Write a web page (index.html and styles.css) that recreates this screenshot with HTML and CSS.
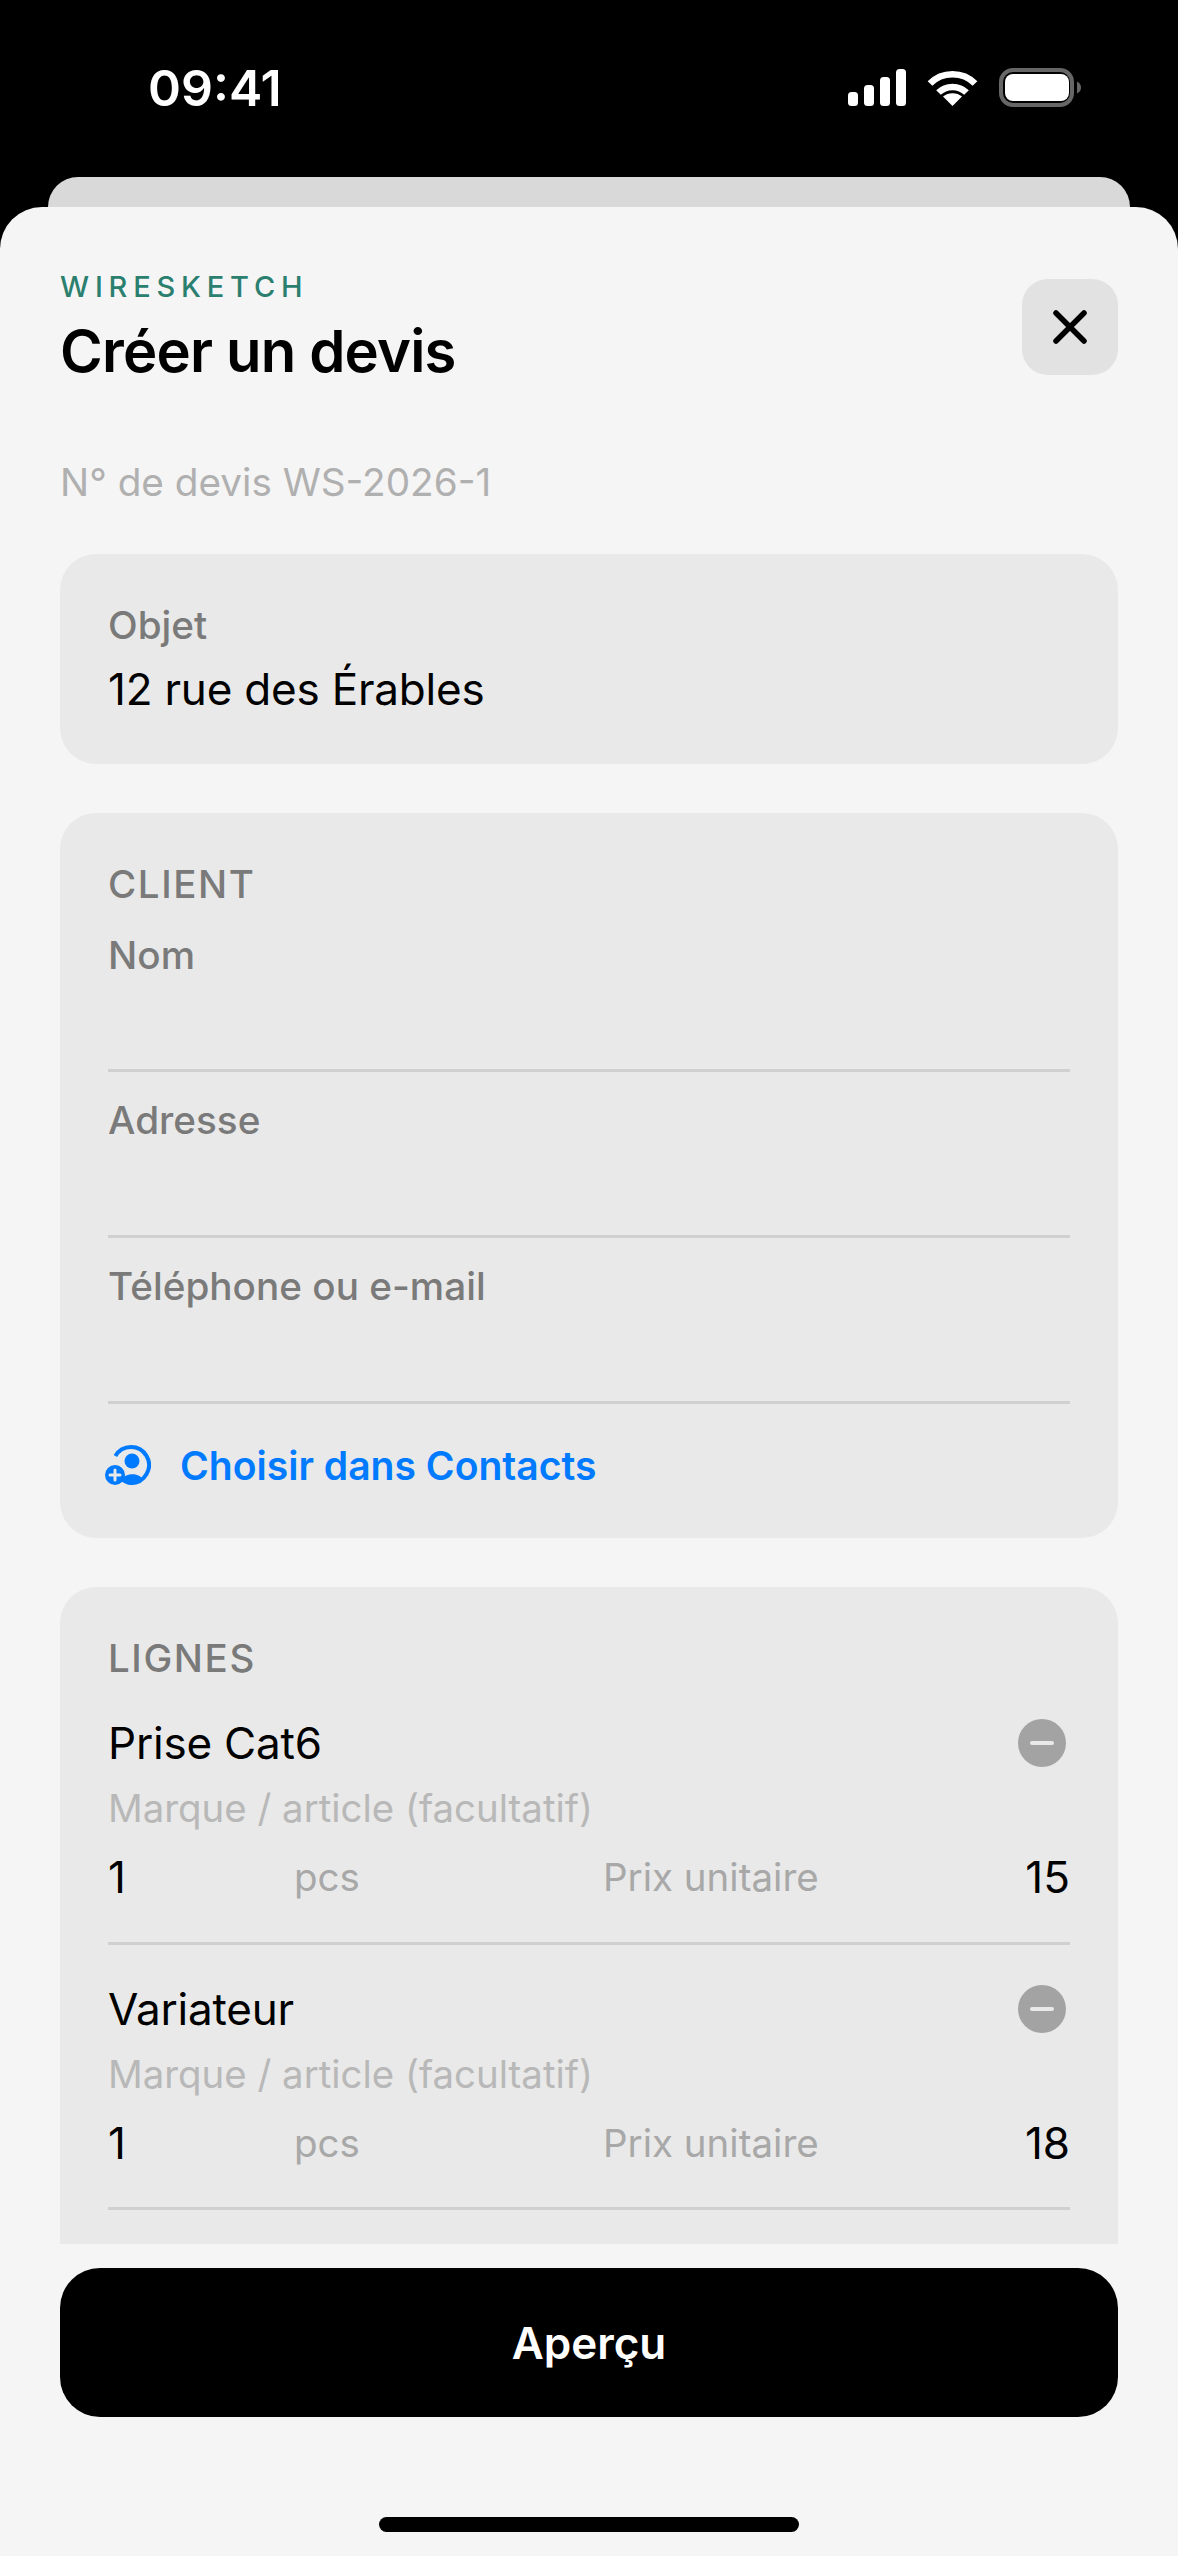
FILE: index.html
```html
<!DOCTYPE html>
<html lang="fr">
<head>
    <meta charset="utf-8"/>
    <title>Créer un devis</title>
    <link rel="stylesheet" href="styles.css">
</head>

<body>
<div class="status">
    <span class="time">09:41</span>
    <div class="status-icons">
        <svg width="58" height="37" viewBox="0 0 58 37" fill="#fff">
            <rect x="0" y="23" width="10" height="14" rx="3.5"/>
            <rect x="16" y="16" width="10" height="21" rx="3.5"/>
            <rect x="32" y="8" width="10" height="29" rx="3.5"/>
            <rect x="48" y="0" width="10" height="37" rx="3.5"/>
        </svg>
        <svg width="51" height="37" viewBox="0 0 51 37" fill="none" stroke="#fff">
            <path d="M3 14.5C15 2 36 2 48 14.5" stroke-width="6.5"/>
            <path d="M11.5 23.5C19 16 32 16 39.5 23.5" stroke-width="6.5"/>
            <path d="M25.5 37L16 27.5C21 23 30 23 35 27.5Z" fill="#fff" stroke="none"/>
        </svg>
        <svg width="82" height="39" viewBox="0 0 82 39">
            <rect x="2" y="2" width="71" height="35" rx="12" fill="none" stroke="#666" stroke-width="4"/>
            <rect x="6" y="6" width="64" height="27" rx="8" fill="#fff"/>
            <path d="M78 13.500C81 15 82 17 82 19.500C82 22 81 24 78 25.500Z" fill="#666"/>
        </svg>
    </div>
</div>
<div class="back-card"></div>

<div class="sheet">
    <div class="sheet-head">
        <div>
            <p class="brand">WIRESKETCH</p>
            <h1 class="title">Créer un devis</h1>
        </div>
        <div class="close">
            <svg width="34" height="34" viewBox="0 0 34 34" fill="none" stroke="#000" stroke-width="5.500" stroke-linecap="round">
                <path d="M3 3L31 31M31 3L3 31"/>
            </svg>
        </div>
    </div>
    <p class="quote-no">N° de devis WS-2026-1</p>

    <div class="scroll">
        <section class="card card-object">
            <p class="label">Objet</p>
            <p class="value">12 rue des Érables</p>
        </section>

        <section class="card card-client">
            <h2 class="card-title">CLIENT</h2>
            <div class="field field-first"><p class="label">Nom</p></div>
            <div class="field"><p class="label">Adresse</p></div>
            <div class="field"><p class="label">Téléphone ou e-mail</p></div>
            <div class="contacts">
                <svg width="46" height="40" viewBox="0 0 46 40">
                    <path d="M10.400 11A18 18 0 1 1 26 38" fill="none" stroke="#007aff" stroke-width="4"/>
                    <circle cx="27" cy="16" r="7.500" fill="#007aff"/>
                    <path d="M16 36C18 28 34 27 37 34C33 38 29 40 26 40C22 40 19 38 16 36Z" fill="#007aff"/>
                    <circle cx="10" cy="30" r="10" fill="#007aff"/>
                    <path d="M5 30H15M10 25V35" stroke="#e9e9e9" stroke-width="3" stroke-linecap="round"/>
                </svg>
                <span>Choisir dans Contacts</span>
            </div>
        </section>

        <section class="card card-lines">
            <h2 class="card-title">LIGNES</h2>
            <div class="line-item line-first">
                <div class="line-top">
                    <span class="item-name">Prise Cat6</span>
                    <span class="remove"></span>
                </div>
                <p class="hint">Marque / article (facultatif)</p>
                <div class="line-nums">
                    <span>1</span>
                    <span class="muted">pcs</span>
                    <span class="muted">Prix unitaire</span>
                    <span class="price">15</span>
                </div>
            </div>
            <div class="line-item">
                <div class="line-top">
                    <span class="item-name">Variateur</span>
                    <span class="remove"></span>
                </div>
                <p class="hint">Marque / article (facultatif)</p>
                <div class="line-nums">
                    <span>1</span>
                    <span class="muted">pcs</span>
                    <span class="muted">Prix unitaire</span>
                    <span class="price">18</span>
                </div>
            </div>
        </section>
    </div>

    <div class="footer">
        <button class="preview">Aperçu</button>
        <div class="home-bar"></div>
    </div>
</div>
</body>
</html>
```

FILE: styles.css
```css
* {
    margin: 0;
    padding: 0;
    box-sizing: border-box;
}
html {
    height: 2556px;
    overflow: hidden;
}
body {
    width: 1178px;
    height: 2556px;
    overflow: hidden;
    background: #000;
    font-family: Inter, "Noto Sans", sans-serif;
    color: #000;
}
.status {
    height: 177px;
    padding: 64px 97px 0 148px;
    display: flex;
    justify-content: space-between;
    align-items: flex-start;
    color: #fff;
}
.time {
    font-size: 50px;
    font-weight: 600;
    line-height: 48px;
}
.status-icons {
    display: flex;
    align-items: center;
    gap: 21px;
    padding-top: 4px;
}
.back-card {
    height: 30px;
    margin: 0 48px;
    background: #d9d9d9;
    border-radius: 30px 30px 0 0;
}
.sheet {
    height: 2349px;
    padding: 0 60px;
    background: #f5f5f5;
    border-radius: 42px 42px 0 0;
    display: flex;
    flex-direction: column;
}
.sheet-head {
    display: flex;
    justify-content: space-between;
    align-items: flex-start;
    padding-top: 62px;
}
.brand {
    font-size: 29px;
    line-height: 36px;
    font-weight: 500;
    letter-spacing: 5.800px;
    color: #2a7f6f;
}
.title {
    margin-top: 11px;
    font-size: 58px;
    line-height: 70px;
    font-weight: 600;
    letter-spacing: -0.800px;
}
.close {
    width: 96px;
    height: 96px;
    margin-top: 10px;
    background: #e2e2e2;
    border-radius: 26px;
    display: flex;
    align-items: center;
    justify-content: center;
}
.quote-no {
    margin-top: 73px;
    font-size: 38.700px;
    line-height: 46px;
    color: #b0b0b0;
}
.scroll {
    margin-top: 49px;
    height: 1690px;
    overflow: hidden;
    flex-shrink: 0;
}
.card {
    background: #e9e9e9;
    border-radius: 36px;
    padding: 0 48px;
    margin-bottom: 49px;
}
.card-object {
    height: 210px;
    padding-top: 48px;
}
.label {
    font-size: 38.700px;
    line-height: 46px;
    font-weight: 500;
    color: #7a7a7a;
}
.value {
    margin-top: 16px;
    font-size: 44px;
    line-height: 50px;
    letter-spacing: -0.200px;
}
.card-client {
    height: 725px;
    padding-top: 48px;
}
.card-title {
    font-size: 38.500px;
    line-height: 46px;
    font-weight: 500;
    letter-spacing: 1.600px;
    color: #7a7a7a;
}
.field {
    height: 166px;
    padding-top: 25px;
    border-bottom: 3px solid #d0d0d0;
}
.field-first {
    height: 165px;
}
.contacts {
    display: flex;
    align-items: center;
    gap: 29px;
    margin: 41px 0 0 -3px;
    height: 40px;
    font-size: 39.100px;
    font-weight: 600;
    color: #007aff;
}
.card-lines {
    padding-top: 48px;
    min-height: 800px;
}
.line-item {
    height: 265px;
    padding-top: 38px;
    border-bottom: 3px solid #d0d0d0;
}
.line-first {
    height: 264px;
    padding-top: 36px;
}
.line-top {
    display: flex;
    justify-content: space-between;
    align-items: center;
    height: 52px;
}
.item-name {
    font-size: 44px;
    line-height: 52px;
    letter-spacing: -0.200px;
}
.remove {
    width: 48px;
    height: 48px;
    margin-right: 4px;
    border-radius: 50%;
    background: #a3a3a3;
    display: flex;
    align-items: center;
    justify-content: center;
}
.remove::before {
    content: "";
    width: 24px;
    height: 4px;
    border-radius: 2px;
    background: #e9e9e9;
}
.hint {
    margin-top: 16px;
    font-size: 38.400px;
    line-height: 46px;
    color: #b8b8b8;
}
.line-nums {
    margin-top: 20px;
    display: grid;
    grid-template-columns: 186px 309px 1fr auto;
    align-items: center;
    font-size: 44px;
    line-height: 52px;
}
.muted {
    font-size: 38.500px;
    color: #a8a8a8;
}
.footer {
    padding-top: 24px;
}
.preview {
    display: block;
    width: 100%;
    height: 149px;
    border: none;
    border-radius: 40px;
    background: #000;
    color: #fff;
    font-family: inherit;
    font-size: 44px;
    font-weight: 600;
}
.home-bar {
    width: 420px;
    height: 15px;
    margin: 100px auto 0;
    border-radius: 8px;
    background: #000;
}
```
